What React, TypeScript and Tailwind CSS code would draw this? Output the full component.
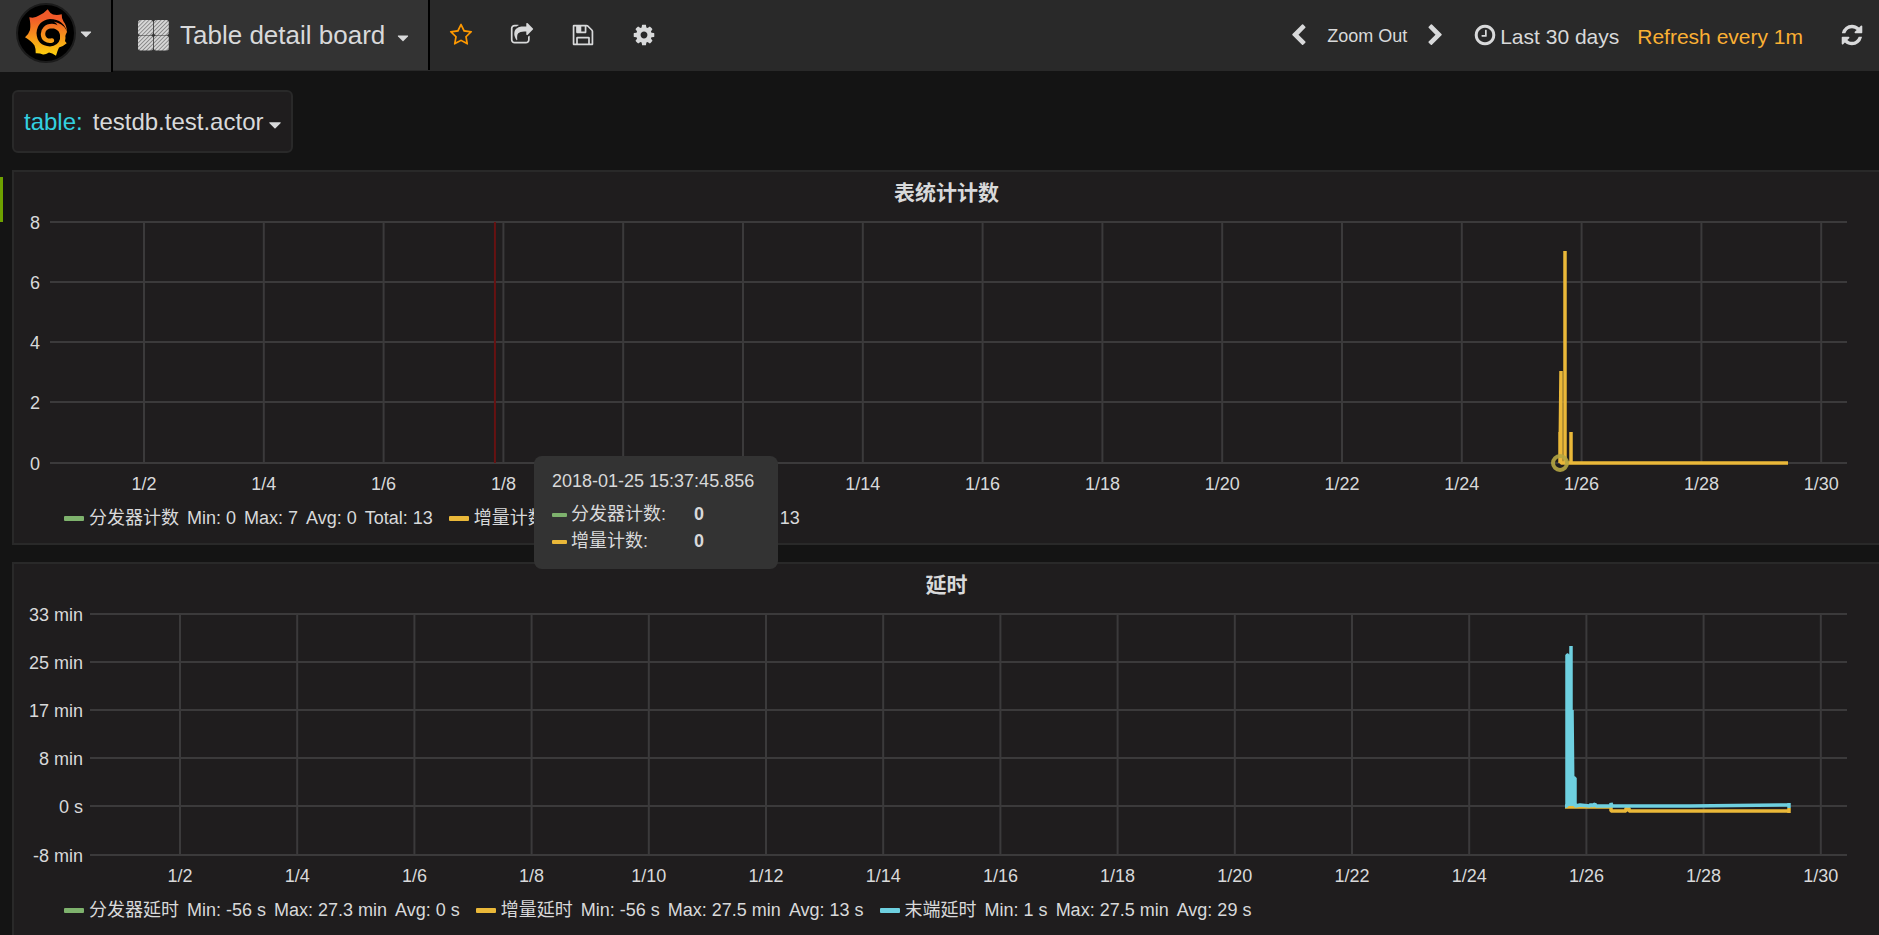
import React from "react";

type Point = [number, number];

interface Series {
  color: string;
  width: number;
  points: Point[];
}

interface ChartProps {
  label: string;
  left: number;
  labelGap: number;
  yTicks: { label: string; y: number }[];
  firstTick: number;
  tickStep: number;
  viewWidth: number;
  series: Series[];
  children?: React.ReactNode;
}

const DATES = Array.from({ length: 15 }, (_, i) => `1/${(i + 1) * 2}`);
const GRID = "#3b3a3b";

function Chart({ label, left, labelGap, yTicks, firstTick, tickStep, viewWidth, series, children }: ChartProps) {
  const pct = (v: number) => `${(v / viewWidth) * 100}%`;
  const top = yTicks[0].y;
  const bottom = yTicks[yTicks.length - 1].y;
  return (
    <div className="flex pr-8" role="img" aria-label={label}>
      <svg width={left} height={297} className="shrink-0 overflow-visible" fill="#d8d9da" fontSize={18}>
        {yTicks.map((t) => (
          <text key={t.label} x={left - labelGap} y={t.y + 7} textAnchor="end">
            {t.label}
          </text>
        ))}
      </svg>
      <svg height={297} className="min-w-0 flex-1 overflow-visible" fill="#d8d9da" fontSize={18}>
        {yTicks.map((t) => (
          <line key={t.label} x1="0" x2="100%" y1={t.y} y2={t.y} stroke={GRID} strokeWidth={2} />
        ))}
        {DATES.map((d, i) => {
          const x = pct(firstTick + i * tickStep);
          return (
            <React.Fragment key={d}>
              <line x1={x} x2={x} y1={top} y2={bottom} stroke={GRID} strokeWidth={2} />
              <text x={x} y={bottom + 27} textAnchor="middle">
                {d}
              </text>
            </React.Fragment>
          );
        })}
        <svg width="100%" height={297} viewBox={`0 0 ${viewWidth} 297`} preserveAspectRatio="none">
          {series.map((s, i) => (
            <polyline
              key={i}
              points={s.points.map((p) => p.join(",")).join(" ")}
              fill="none"
              stroke={s.color}
              strokeWidth={s.width}
              strokeLinejoin="bevel"
              vectorEffect="non-scaling-stroke"
            />
          ))}
        </svg>
        {children}
      </svg>
    </div>
  );
}

interface LegendItem {
  swatch: string;
  name: string;
  stats: string[];
}

function Legend({ items }: { items: LegendItem[] }) {
  return (
    <ul className="flex gap-4 pl-[50px] text-[18px] leading-[26px] whitespace-nowrap">
      {items.map((item) => (
        <li key={item.name} className="flex items-center gap-2">
          <button type="button" className="flex items-center gap-[5px]">
            <span className={`h-[5px] w-5 rounded-[1px] ${item.swatch}`} />
            {item.name}
          </button>
          {item.stats.map((s) => (
            <span key={s}>{s}</span>
          ))}
        </li>
      ))}
    </ul>
  );
}

function Panel({ title, className = "", children }: { title: string; className?: string; children: React.ReactNode }) {
  return (
    <section className={`border-2 border-r-0 border-[#292929] bg-[#1f1d1e] ${className}`}>
      <h2 className="pt-[5px] text-center text-[21px] leading-[31px] font-bold">{title}</h2>
      {children}
    </section>
  );
}

function GrafanaLogo() {
  return (
    <svg width="60" height="60" viewBox="0 0 60 60" aria-hidden="true">
      <defs>
        <linearGradient id="flame" gradientUnits="userSpaceOnUse" x1="30" y1="6" x2="30" y2="53">
          <stop offset="0.2" stopColor="#f15a29" />
          <stop offset="1" stopColor="#fcd20c" />
        </linearGradient>
      </defs>
      <circle cx="30" cy="30" r="29" fill="#000" stroke="#1b1b1b" strokeWidth="2" />
      <path
        fill="url(#flame)"
        d="M31.700 6.300 Q34 10.500 37 11.500 Q41 12.500 45.700 11.300 Q45.500 16 47.500 18.500 Q50.500 22 51 29 L48 35 Q48.500 38.500 50.700 40.300 Q46.500 44 43 44.500 Q41.500 47.500 40 52.700 Q36 50 33 49.500 Q29 52 27 51.500 Q23.500 50 19.700 50.300 Q20 46 18.500 42.500 Q16 38.500 9 34.300 Q13 30.500 14 27 Q15 22 13.300 14.300 Q19 15.500 23 12.500 Q28 10.500 31.700 6.300 Z"
      />
      <path
        fill="#000"
        d="M52 31 Q49 22 42 20 Q35 17.500 40 20 L44 26 L44 36 Q42 43 34 43.500 Q21 42.500 20.500 30 Q21.500 17.500 34 16 Q48 16 52 31 Z"
      />
      <path
        fill="none"
        stroke="url(#flame)"
        strokeWidth="4.400"
        strokeLinecap="round"
        d="M46.500 39 C47.500 28 43 23.500 36 23 C30 23 27 27 27 31 C27 36 31 38.500 36 37.500"
      />
      <path
        fill="none"
        stroke="url(#flame)"
        strokeWidth="2"
        d="M46 28 C49 31 49 34 48 38"
      />
    </svg>
  );
}

function DashboardGlyph() {
  return (
    <svg width="31" height="31" viewBox="0 0 31 31" aria-hidden="true">
      <defs>
        <pattern id="hatch" width="2.800" height="2.800" patternUnits="userSpaceOnUse" patternTransform="rotate(45)">
          <rect width="2.800" height="2.800" fill="#888" />
          <rect width="1.900" height="2.800" fill="#d8d8d8" />
        </pattern>
      </defs>
      {[0, 15.8].map((x) =>
        [0, 15.4].map((y) => (
          <rect key={`${x}-${y}`} x={x} y={y} width="15" height="15" rx="2.500" fill="url(#hatch)" />
        )),
      )}
    </svg>
  );
}

const ICONS = {
  star: "M1201 1004l306-297-422-62-189-382-189 382-422 62 306 297-73 421 378-199 377 199zm527-357q0 22-26 48l-363 354 86 500q1 7 1 20 0 50-41 50-19 0-40-12l-449-236-449 236q-22 12-40 12-21 0-31.500-14.500t-10.500-35.500q0-6 2-20l86-500-364-354q-25-27-25-48 0-37 56-46l502-73 225-455q19-41 49-41t49 41l225 455 502 73q56 9 56 46z",
  share:
    "M1472 989v259q0 119-84.500 203.500t-203.500 84.500h-832q-119 0-203.500-84.500t-84.500-203.500v-832q0-119 84.500-203.500t203.500-84.500h255q13 0 22.500 9.500t9.500 22.500q0 27-26 32-77 26-133 60-10 4-16 4h-112q-66 0-113 47t-47 113v832q0 66 47 113t113 47h832q66 0 113-47t47-113v-214q0-19 18-29 28-13 54-37 16-16 35-8 21 9 21 29zm237-496l-384 384q-18 19-45 19-12 0-25-5-39-17-39-59v-192h-160q-323 0-438 131-119 137-74 473 3 23-20 34-8 2-12 2-16 0-26-13-10-14-21-31t-39.500-68.500-49.500-99.500-38.500-114-17.500-122q0-49 3.500-91t14-90 28-88 47-81.500 68.500-74 94.500-61.500 124.500-48.500 159.500-30.500 196.500-11h160v-192q0-42 39-59 13-5 25-5 26 0 45 19l384 384q19 19 19 45t-19 45z",
  save: "M512 1536h768v-384h-768v384zm896 0h128v-896q0-14-10-38.500t-20-34.500l-281-281q-10-10-34-20t-39-10v416q0 40-28 68t-68 28h-576q-40 0-68-28t-28-68v-416h-128v1280h128v-416q0-40 28-68t68-28h832q40 0 68 28t28 68v416zm-384-928v-320q0-13-9.500-22.500t-22.500-9.500h-192q-13 0-22.500 9.500t-9.500 22.500v320q0 13 9.500 22.500t22.500 9.500h192q13 0 22.500-9.500t9.500-22.500zm640 32v928q0 40-28 68t-68 28h-1344q-40 0-68-28t-28-68v-1344q0-40 28-68t68-28h928q40 0 88 20t76 48l280 280q28 28 48 76t20 88z",
  cog: "M1152 896q0-106-75-181t-181-75-181 75-75 181 75 181 181 75 181-75 75-181zm512-109v222q0 12-8 23t-20 13l-185 28q-19 54-39 91 35 50 107 138 10 12 10 25t-9 23q-27 37-99 108t-94 71q-12 0-26-9l-138-108q-44 23-91 38-16 136-29 186-7 28-36 28h-222q-14 0-24.500-8.500t-11.500-21.500l-28-184q-49-16-90-37l-141 107q-10 9-25 9-14 0-25-11-126-114-165-168-7-10-7-23 0-12 8-23 15-21 51-66.500t54-70.500q-27-50-41-99l-183-27q-13-2-21-12.500t-8-23.500v-222q0-12 8-23t19-13l186-28q14-46 39-92-40-57-107-138-10-12-10-24 0-10 9-23 26-36 98.500-107.500t94.500-71.500q13 0 26 10l138 107q44-23 91-38 16-136 29-186 7-28 36-28h222q14 0 24.500 8.500t11.500 21.500l28 184q49 16 90 37l142-107q9-9 24-9 13 0 25 10 129 119 165 170 7 8 7 22 0 12-8 23-15 21-51 66.500t-54 70.500q26 50 41 98l183 28q13 2 21 12.500t8 23.500z",
  refresh:
    "M1639 1056q0 5-1 7-64 268-268 434.500t-478 166.500q-146 0-282.500-55t-243.500-157l-129 129q-19 19-45 19t-45-19-19-45v-448q0-26 19-45t45-19h448q26 0 45 19t19 45-19 45l-137 137q71 66 161 102t187 36q134 0 250-65t186-179q11-17 53-117 8-23 30-23h192q13 0 22.500 9.500t9.500 22.500zm25-800v448q0 26-19 45t-45 19h-448q-26 0-45-19t-19-45 19-45l138-138q-148-137-349-137-134 0-250 65t-186 179q-11 17-53 117-8 23-30 23h-199q-13 0-22.500-9.500t-9.500-22.500v-7q65-268 270-434.500t480-166.500q146 0 284 55.500t245 156.500l130-129q19-19 45-19t45 19 19 45z",
  left: "M1427 301l-531 531 531 531q19 19 19 45t-19 45l-166 166q-19 19-45 19t-45-19l-742-742q-19-19-19-45t19-45l742-742q19-19 45-19t45 19l166 166q19 19 19 45t-19 45z",
  right:
    "M1363 877l-742 742q-19 19-45 19t-45-19l-166-166q-19-19-19-45t19-45l531-531-531-531q-19-19-19-45t19-45l166-166q19-19 45-19t45 19l742 742q19 19 19 45t-19 45z",
  caret: "M1408 704q0 26-19 45l-448 448q-19 19-45 19t-45-19l-448-448q-19-19-19-45t19-45 45-19h896q26 0 45 19t19 45z",
  clock:
    "M1024 544v448q0 14-9 23t-23 9h-320q-14 0-23-9t-9-23v-64q0-14 9-23t23-9h224v-352q0-14 9-23t23-9h64q14 0 23 9t9 23zm416 352q0-148-73-273t-198-198-273-73-273 73-198 198-73 273 73 273 198 198 273 73 273-73 198-198 73-273zm224 0q0 209-103 385.500t-279.500 279.500-385.500 103-385.500-103-279.500-279.500-103-385.500 103-385.500 279.500-279.500 385.500-103 385.500 103 279.500 279.500 103 385.500z",
};

function Icon({ name, size = 24, className }: { name: keyof typeof ICONS; size?: number; className?: string }) {
  return (
    <svg viewBox="0 0 1792 1792" width={size} height={size} fill="currentColor" className={className} aria-hidden="true">
      <path d={ICONS[name]} />
    </svg>
  );
}

const COUNT_TICKS = [
  { label: "8", y: 14 },
  { label: "6", y: 74 },
  { label: "4", y: 134 },
  { label: "2", y: 194 },
  { label: "0", y: 255 },
];

const DELAY_TICKS = [
  { label: "33 min", y: 14 },
  { label: "25 min", y: 62 },
  { label: "17 min", y: 110 },
  { label: "8 min", y: 158 },
  { label: "0 s", y: 206 },
  { label: "-8 min", y: 255 },
];

const COUNT_POINTS: Point[] = [
  [1510, 255], [1510, 224], [1510, 255], [1511, 163], [1511, 255], [1515, 255], [1515, 43], [1515, 255],
  [1521, 255], [1521, 224], [1521, 255], [1738, 255],
];

const DELAY_AMBER: Point[] = [
  [1475, 207], [1521, 207], [1521, 211], [1536, 211], [1536, 208], [1539, 208], [1539, 211], [1699, 211],
  [1699, 208], [1699, 213],
];

const DELAY_CYAN: Point[] = [
  [1475, 206], [1477, 206], [1477, 55], [1478, 55], [1478, 206], [1480, 80], [1480, 206], [1481, 46], [1481, 206],
  [1482, 110], [1483, 206], [1484, 178], [1485, 178], [1485, 206], [1490, 205], [1500, 206], [1501, 204],
  [1502, 206], [1505, 204], [1506, 206], [1521, 206], [1521, 203], [1522, 206], [1600, 206], [1699, 205],
  [1699, 203], [1699, 208],
];

export default function App() {
  return (
    <div className="flex min-h-screen flex-col overflow-x-hidden bg-[#141414] font-['Liberation_Sans','Noto_Sans_CJK_SC',sans-serif] text-[#d8d9da]">
      <header className="flex h-[71px] items-stretch border-b border-[#292929] bg-[#292929]">
        <button
          type="button"
          aria-label="Main menu"
          className="flex h-[72px] w-[113px] shrink-0 items-center gap-px border-r-2 border-black bg-[#333] pb-[6px] pl-4"
        >
          <GrafanaLogo />
          <Icon name="caret" size={18} className="mt-0.5" />
        </button>
        <button
          type="button"
          className="flex shrink-0 items-center border-r-2 border-black bg-[#333] pr-4 pl-[25px] text-[26px]"
        >
          <DashboardGlyph />
          <span className="pr-[9px] pl-[11px]">Table detail board</span>
          <Icon name="caret" size={18} className="mt-[6px]" />
        </button>
        <nav aria-label="Dashboard actions" className="flex items-center gap-[37px] pl-[19px]">
          <button type="button" aria-label="Star" className="text-[#ff9900]"><Icon name="star" /></button>
          <button type="button" aria-label="Share"><Icon name="share" /></button>
          <button type="button" aria-label="Save"><Icon name="save" /></button>
          <button type="button" aria-label="Settings"><Icon name="cog" /></button>
        </nav>
        <div className="ml-auto flex items-center pr-[15px] text-[21px] whitespace-nowrap">
          <button type="button" aria-label="Back in time"><Icon name="left" size={23} /></button>
          <button type="button" className="px-[17px] pt-[3px] text-[18px]">Zoom Out</button>
          <button type="button" aria-label="Forward in time"><Icon name="right" size={23} /></button>
          <button type="button" className="flex items-center gap-[3px] pl-[26px]">
            <Icon name="clock" />
            <span className="pt-[3px]">Last 30 days</span>
          </button>
          <button type="button" className="pt-[3px] pr-[37px] pl-[18px] text-[#fbb034]">Refresh every 1m</button>
          <button type="button" aria-label="Refresh"><Icon name="refresh" /></button>
        </div>
      </header>

      <main className="flex flex-1 flex-col gap-[17px] pt-[19px] pl-3">
        <div className="flex h-[63px] items-center self-start rounded-md border-2 border-[#292929] bg-[#1f1d1e] pr-[6px] pl-[10px] text-[24px]">
          <span id="table-label" className="pr-[10px] text-[#33d1e0]">table:</span>
          <button type="button" aria-labelledby="table-label table-value" className="flex items-center gap-0.5">
            <span id="table-value">testdb.test.actor</span>
            <Icon name="caret" size={20} className="mt-[6px]" />
          </button>
        </div>

        <div className="relative">
          <button type="button" aria-label="Row menu" className="absolute top-[7px] -left-3 h-[45px] w-[3px] bg-[#6ea100]" />
          <Panel title="表统计计数">
            <Chart
              label="表统计计数"
              left={36}
              labelGap={10}
              yTicks={COUNT_TICKS}
              firstTick={94}
              tickStep={119.8}
              viewWidth={1797}
              series={[{ color: "#eab839", width: 3.5, points: COUNT_POINTS }]}
            >
              <line x1="24.760%" x2="24.760%" y1="14" y2="255" stroke="#661212" strokeWidth="2" />
              <circle cx="84.030%" cy="255" r="7" fill="none" stroke="#b5a642" strokeWidth="4" opacity="0.900" />
            </Chart>
            <Legend
              items={[
                { swatch: "bg-[#7eb26d]", name: "分发器计数", stats: ["Min: 0", "Max: 7", "Avg: 0", "Total: 13"] },
                { swatch: "bg-[#eab839]", name: "增量计数", stats: ["Min: 0", "Max: 7", "Avg: 0", "Total: 13"] },
              ]}
            />
            <div className="h-3" />
          </Panel>

          <div
            role="tooltip"
            className="absolute top-[286px] left-[522px] flex w-[244px] flex-col rounded-lg bg-[#333] px-[18px] pt-[11px] pb-[14px] text-[18px]"
          >
            <div className="pb-[6px] leading-[28px] whitespace-nowrap">2018-01-25 15:37:45.856</div>
            {[
              { swatch: "bg-[#7eb26d]", name: "分发器计数:" },
              { swatch: "bg-[#eab839]", name: "增量计数:" },
            ].map((row) => (
              <div key={row.name} className="flex items-center leading-[27px]">
                <span className={`mr-1 h-1 w-[15px] rounded-[1px] ${row.swatch}`} />
                <span className="w-[123px]">{row.name}</span>
                <b>0</b>
              </div>
            ))}
          </div>
        </div>

        <Panel title="延时" className="flex-1 border-b-0">
          <Chart
            label="延时"
            left={76}
            labelGap={7}
            yTicks={DELAY_TICKS}
            firstTick={90}
            tickStep={117.2}
            viewWidth={1757}
            series={[
              { color: "#eab839", width: 3.5, points: DELAY_AMBER },
              { color: "#6ed0e0", width: 3.5, points: DELAY_CYAN },
            ]}
          />
          <Legend
            items={[
              { swatch: "bg-[#7eb26d]", name: "分发器延时", stats: ["Min: -56 s", "Max: 27.3 min", "Avg: 0 s"] },
              { swatch: "bg-[#eab839]", name: "增量延时", stats: ["Min: -56 s", "Max: 27.5 min", "Avg: 13 s"] },
              { swatch: "bg-[#6ed0e0]", name: "末端延时", stats: ["Min: 1 s", "Max: 27.5 min", "Avg: 29 s"] },
            ]}
          />
        </Panel>
      </main>
    </div>
  );
}
